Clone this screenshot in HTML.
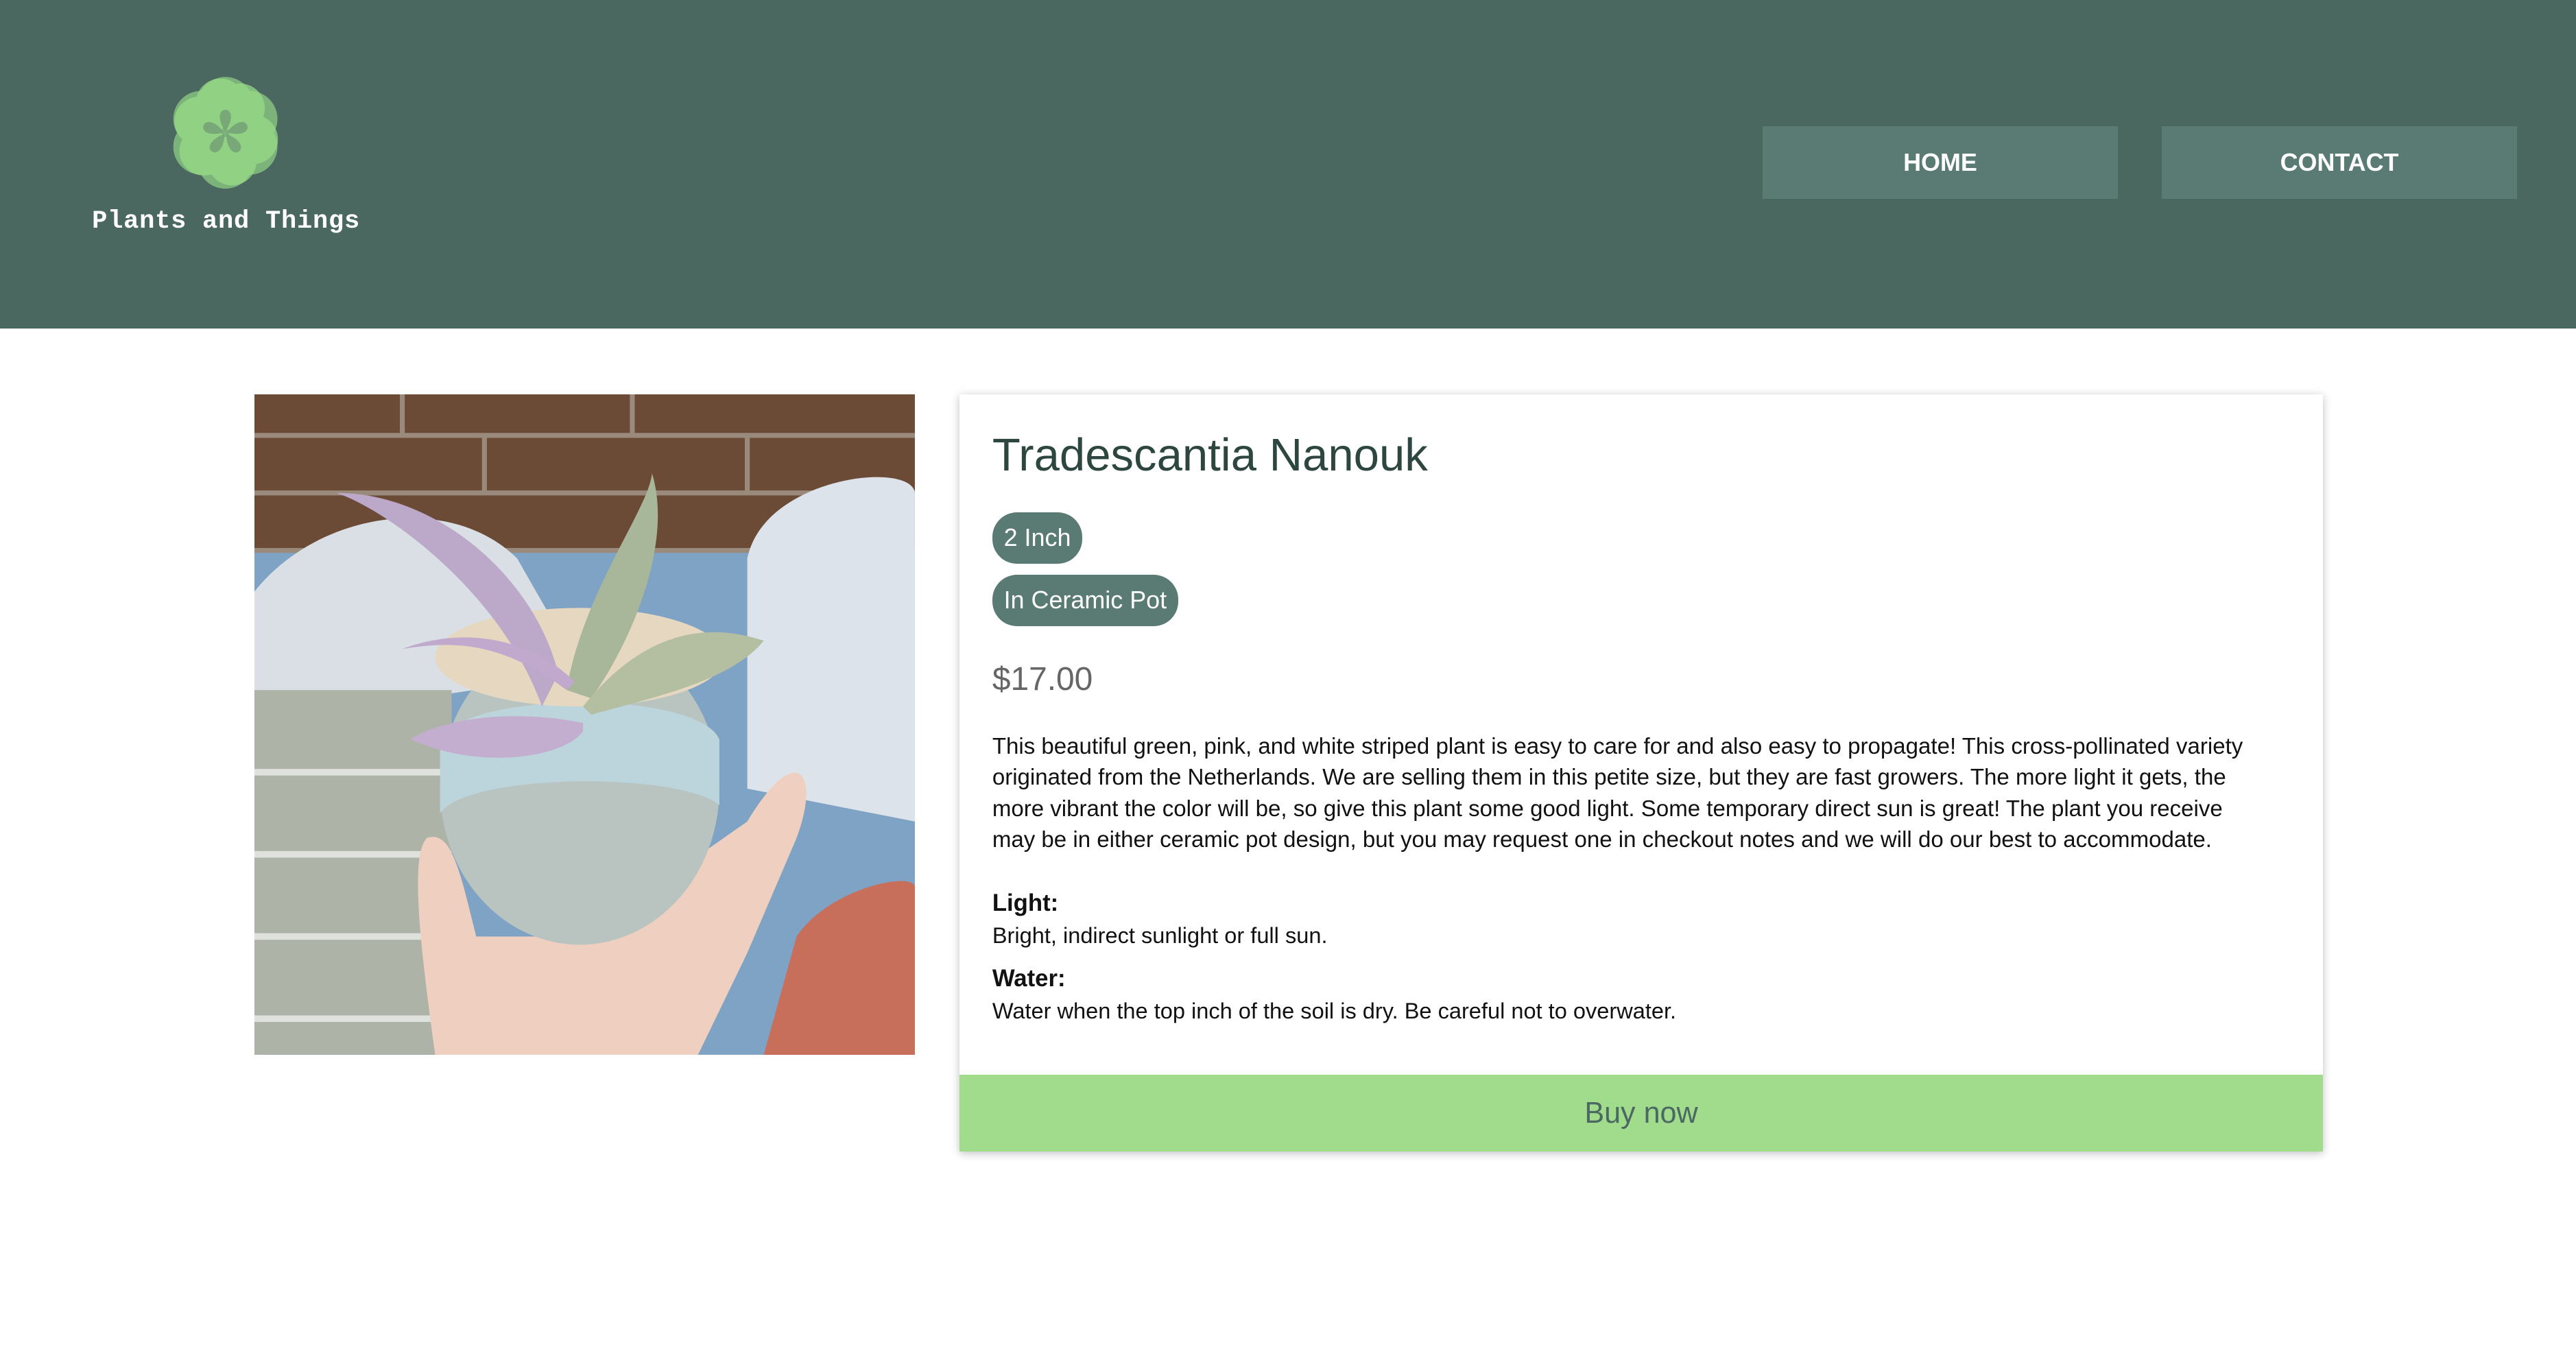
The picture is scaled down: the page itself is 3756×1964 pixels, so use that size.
<!DOCTYPE html>
<html><head><meta charset="utf-8"><style>
html,body{margin:0;padding:0;background:#fff;}
body{width:1568px;height:820px;zoom:2.3954;font-family:"Liberation Sans",sans-serif;position:relative;overflow:hidden;}
header{position:absolute;left:0;top:0;width:1568px;height:200px;background:#4a6760;}
.logo-t{position:absolute;left:56px;top:126px;font-family:"Liberation Mono",monospace;font-weight:bold;font-size:15.5px;color:#fff;letter-spacing:0.3px}
.btn{position:absolute;top:77px;height:44px;width:216px;background:#5a7b73;color:#fff;font-size:15px;text-align:center;line-height:44px;font-weight:bold}
.img{position:absolute;left:155px;top:240px;width:402px;height:402px;overflow:hidden}
.card{position:absolute;left:584px;top:240px;width:830px;height:461px;background:#fff;box-shadow:0 1px 5px rgba(0,0,0,.25)}
h1{position:absolute;left:20px;top:21px;margin:0;font-weight:normal;font-size:28px;color:#2d4640}
.tag{position:absolute;left:20px;height:31px;line-height:31px;padding:0 7px;border-radius:15px;background:#5a7b73;color:#fff;font-size:15px}
.price{position:absolute;left:20px;top:162px;font-size:20px;color:#666}
.desc{position:absolute;left:20px;top:205px;width:772px;font-size:13.8px;line-height:19px;color:#111}
.lbl{position:absolute;left:20px;font-size:14.5px;font-weight:bold;color:#111}
.txt{position:absolute;left:20px;font-size:13.6px;color:#111}
.buy{position:absolute;left:0;bottom:0;width:830px;height:47px;background:#a0dc8c;color:#4b6862;font-size:18px;text-align:center;line-height:47px}
</style></head><body>
<header>
<svg style="position:absolute;left:100px;top:44px" width="74" height="74" viewBox="-37 -37 74 74">
<g fill="#98dc88" opacity="0.65">
<circle cx="0" cy="-17" r="17"/><circle cx="14.7" cy="-8.5" r="17"/><circle cx="14.7" cy="8.5" r="17"/><circle cx="0" cy="17" r="17"/><circle cx="-14.7" cy="8.5" r="17"/><circle cx="-14.7" cy="-8.5" r="17"/>
</g>
<g fill="#98dc88" opacity="0.75">
<circle cx="9" cy="-15" r="15"/><circle cx="17" cy="4" r="15"/><circle cx="4" cy="17" r="15"/><circle cx="-13" cy="11" r="15"/><circle cx="-16" cy="-7" r="15"/><circle cx="-3" cy="-18" r="15"/>
</g>
<g fill="#78a878">
<path d="M0 -1 C-5 -8 -4 -14 0 -14 C4 -14 5 -8 0 -1Z"/>
<path d="M0 -1 C-5 -8 -4 -14 0 -14 C4 -14 5 -8 0 -1Z" transform="rotate(72)"/>
<path d="M0 -1 C-5 -8 -4 -14 0 -14 C4 -14 5 -8 0 -1Z" transform="rotate(144)"/>
<path d="M0 -1 C-5 -8 -4 -14 0 -14 C4 -14 5 -8 0 -1Z" transform="rotate(216)"/>
<path d="M0 -1 C-5 -8 -4 -14 0 -14 C4 -14 5 -8 0 -1Z" transform="rotate(288)"/>
</g>
</svg>
<div class="logo-t">Plants and Things</div>
<div class="btn" style="left:1073px">HOME</div>
<div class="btn" style="left:1316px">CONTACT</div>
</header>
<div class="img"><svg width="402" height="402" viewBox="0 0 402 402">
<rect width="402" height="402" fill="#7fa3c4"/>
<rect width="402" height="95" fill="#6b4a36"/>
<g stroke="#9a8a7c" stroke-width="3"><line x1="0" y1="25" x2="402" y2="25"/><line x1="0" y1="60" x2="402" y2="60"/><line x1="0" y1="95" x2="402" y2="95"/><line x1="90" y1="0" x2="90" y2="25"/><line x1="230" y1="0" x2="230" y2="25"/><line x1="140" y1="25" x2="140" y2="60"/><line x1="300" y1="25" x2="300" y2="60"/></g>
<path d="M0 120 C40 70 120 60 160 100 L200 170 L0 200Z" fill="#d9dfe4"/>
<path d="M300 100 C310 50 400 40 402 60 L402 260 L300 240Z" fill="#dde3ea"/>
<rect x="0" y="180" width="120" height="222" fill="#aeb3a8"/>
<g stroke="#dfe2dc" stroke-width="4"><line x1="0" y1="230" x2="120" y2="230"/><line x1="0" y1="280" x2="120" y2="280"/><line x1="0" y1="330" x2="120" y2="330"/><line x1="0" y1="380" x2="120" y2="380"/></g>
<path d="M330 330 C350 300 402 290 402 300 L402 402 L310 402Z" fill="#c86f5c"/>
<path d="M110 402 C100 330 95 280 105 270 C120 265 125 290 135 330 L200 330 L300 260 C330 210 345 230 330 270 L300 340 L270 402Z" fill="#efcfbf"/>
<ellipse cx="198" cy="240" rx="85" ry="95" fill="#b9c4c0"/>
<path d="M113 210 C130 180 270 180 283 210 L283 250 C260 230 130 230 113 255Z" fill="#bcd4dc"/>
<ellipse cx="198" cy="160" rx="88" ry="30" fill="#e6d8c0"/>
<path d="M175 190 C150 120 80 70 50 60 C110 60 170 110 185 170Z" fill="#bca8c8"/>
<path d="M190 180 C200 120 240 70 242 48 C255 90 230 150 205 185Z" fill="#a8b69a"/>
<path d="M190 180 C150 150 120 150 90 155 C130 140 170 150 195 175Z" fill="#c0a9cc"/>
<path d="M200 190 C240 140 280 140 310 150 C290 175 240 185 205 195Z" fill="#b4bfa2"/>
<path d="M200 200 C150 190 110 200 95 210 C140 230 190 220 200 205Z" fill="#c4aed0"/>
</svg></div>
<div class="card">
<h1>Tradescantia Nanouk</h1>
<div class="tag" style="top:72px">2 Inch</div>
<div class="tag" style="top:110px">In Ceramic Pot</div>
<div class="price">$17.00</div>
<div class="desc">This beautiful green, pink, and white striped plant is easy to care for and also easy to propagate! This cross-pollinated variety originated from the Netherlands. We are selling them in this petite size, but they are fast growers. The more light it gets, the more vibrant the color will be, so give this plant some good light. Some temporary direct sun is great! The plant you receive may be in either ceramic pot design, but you may request one in checkout notes and we will do our best to accommodate.</div>
<div class="lbl" style="top:302px">Light:</div>
<div class="txt" style="top:322px">Bright, indirect sunlight or full sun.</div>
<div class="lbl" style="top:348px">Water:</div>
<div class="txt" style="top:368px">Water when the top inch of the soil is dry. Be careful not to overwater.</div>
<div class="buy">Buy now</div>
</div>
</body></html>
